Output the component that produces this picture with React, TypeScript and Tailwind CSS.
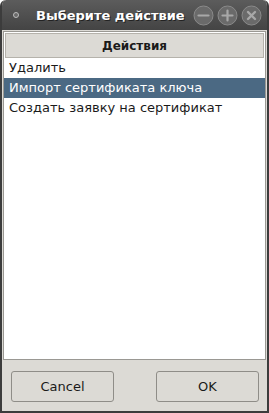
import React, { useState } from 'react';

const actions = ['Удалить', 'Импорт сертификата ключа', 'Создать заявку на сертификат'];

const TitleButton = ({ kind }: { kind: 'min' | 'max' | 'close' }) => (
  <svg width="21" height="21" viewBox="0 0 21 21" className="shrink-0">
    <circle cx="10.5" cy="10.5" r="9.5" fill="#6a6a6a" stroke="#8a8a8a" strokeWidth="1" />
    {kind === 'min' && <path d="M5.5 10.5h10" stroke="#a8a8a8" strokeWidth="2.2" strokeLinecap="round" />}
    {kind === 'max' && <path d="M5.5 10.5h10M10.5 5.5v10" stroke="#a8a8a8" strokeWidth="2.2" strokeLinecap="round" />}
    {kind === 'close' && <path d="M7 7l7 7M14 7l-7 7" stroke="#a8a8a8" strokeWidth="2.4" strokeLinecap="round" />}
  </svg>
);

export default function App() {
  const [selected, setSelected] = useState(1);

  return (
    <div
      className="w-[269px] h-[413px] flex flex-col bg-[#dcdad5] overflow-hidden rounded-t-[6px] border-x-2 border-b-2 border-[#3c3c3c]"
      style={{ fontFamily: '"DejaVu Sans", sans-serif' }}
    >
      {/* title bar */}
      <div className="h-[30px] -mx-[2px] flex items-center bg-gradient-to-b from-[#5c5c5c] to-[#444444] rounded-t-[6px] pl-[13px] pr-[7px]">
        <span className="w-[6px] h-[6px] rounded-full border border-[#bdbdbd] bg-[#6a6a6a] shrink-0" />
        <span className="ml-[17px] text-[13px] font-bold text-white leading-none whitespace-nowrap [text-shadow:1px_1px_0_#222]">
          Выберите действие
        </span>
        <div className="ml-auto flex gap-[3px]">
          <TitleButton kind="min" />
          <TitleButton kind="max" />
          <TitleButton kind="close" />
        </div>
      </div>

      {/* list */}
      <div className="mt-[1px] mx-[1px] h-[329px] bg-white border border-[#9a9893] flex flex-col">
        <div className="h-[25px] mx-[1px] mt-[1px] bg-[#dcdad5] border border-[#b5b2ab] flex items-center justify-center text-[12px] font-bold text-[#1a1a1a]">
          Действия
        </div>
        <div className="flex flex-col">
          {actions.map((a, i) => (
            <div
              key={a}
              onClick={() => setSelected(i)}
              className={`h-[20px] flex items-center pl-[5px] text-[13px] whitespace-nowrap cursor-default ${
                i === selected ? 'bg-[#4b6983] text-white' : 'text-[#1a1a1a]'
              }`}
            >
              {a}
            </div>
          ))}
        </div>
      </div>

      {/* buttons */}
      <div className="flex justify-between pl-[9px] pr-[8px] pt-[11px]">
        <button className="w-[103px] h-[31px] rounded-[3px] border border-[#8f8d88] bg-[#dcdad5] text-[13px] text-[#1a1a1a]">
          Cancel
        </button>
        <button className="w-[103px] h-[31px] rounded-[3px] border border-[#8f8d88] bg-[#dcdad5] text-[13px] text-[#1a1a1a]">
          OK
        </button>
      </div>
    </div>
  );
}
